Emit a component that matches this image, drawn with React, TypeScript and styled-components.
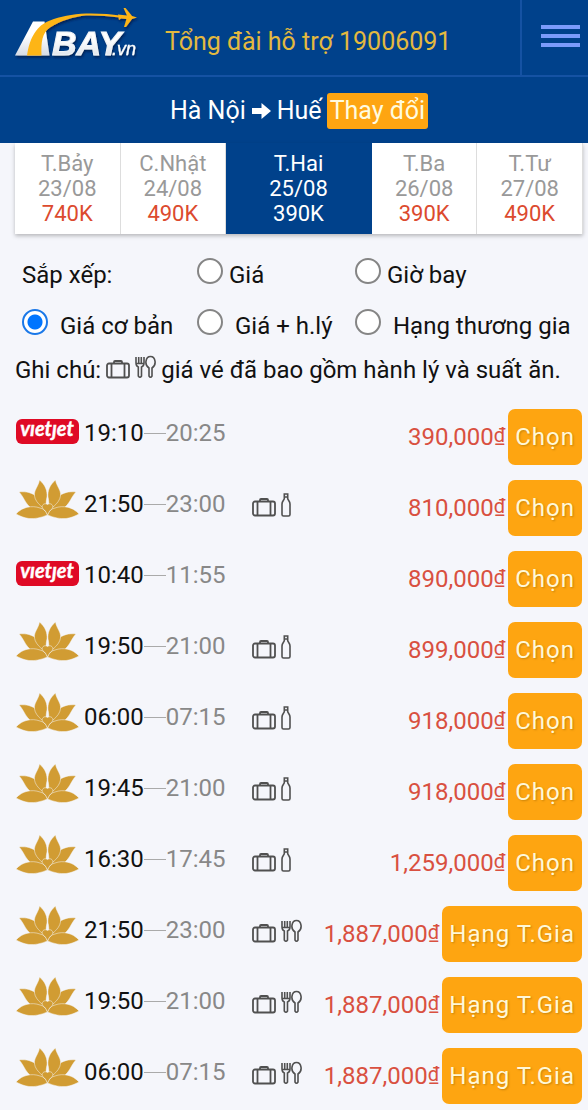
import React from 'react';
import styled, { createGlobalStyle } from 'styled-components';

const GlobalStyle = createGlobalStyle`
  * { box-sizing: border-box; }
  body { margin: 0; background: #f5f6fb; color: #111; font-family: Roboto, "Liberation Sans", sans-serif; font-size: 24px; line-height: 28px; }
  button { font: inherit; border: 0; cursor: pointer; }
  a { color: inherit; text-decoration: none; }
`;

const Header = styled.header`
  display: flex;
  align-items: stretch;
  height: 77px;
  background: #00418b;
  border-bottom: 2px solid #1552a3;
`;
const LogoLink = styled.a`
  flex: none;
  padding: 4px 0 0 12px;
`;
const Hotline = styled.a`
  flex: 1;
  padding: 28px 0 0 25px;
  font-size: 25px;
  color: #e3b93f;
  white-space: nowrap;
`;
const MenuButton = styled.button`
  display: flex;
  flex-direction: column;
  gap: 5px;
  width: 68px;
  padding: 25px 8px 0 19px;
  background: none;
  border-left: 2px solid #1552a3;
`;
const MenuLine = styled.span`
  height: 4px;
  width: 100%;
  background: #7c9bfb;
`;
const RouteBar = styled.section`
  display: flex;
  justify-content: center;
  align-items: center;
  gap: 5px;
  padding: 16px 0 14px 10px;
  min-height: 66px;
  font-size: 25px;
  background: #00418b;
  color: #fff;
`;
const ChangeButton = styled.button`
  padding: 4px 3px;
  border-radius: 3px;
  background: #fea511;
  color: #fffbe0;
`;
const Days = styled.nav`
  display: grid;
  grid-template-columns: 105fr 105fr 145fr 105fr 105fr;
  margin: 0 5px 0 15px;
  background: #fff;
  box-shadow: 0 2px 4px rgba(0, 0, 0, 0.25);
`;
const Day = styled.a<{ $active?: boolean }>`
  display: flex;
  flex-direction: column;
  align-items: center;
  padding: 8px 0;
  font-size: 22px;
  line-height: 25px;
  color: ${(p) => (p.$active ? '#fff' : '#999')};
  background: ${(p) => (p.$active ? '#00418b' : '#fff')};
  border-right: 1px solid ${(p) => (p.$active ? '#00418b' : '#ddd')};
`;
const DayPrice = styled.span<{ $active?: boolean }>`
  color: ${(p) => (p.$active ? '#fff' : '#dc4a2e')};
`;
const SortForm = styled.form`
  display: grid;
  grid-template-columns: 175fr 158fr 233fr;
  row-gap: 20px;
  margin: 0;
  padding: 24px 0 0 22px;
`;
const SortTitle = styled.span`
  padding-top: 3px;
`;
const Option = styled.label<{ $wide?: boolean }>`
  display: flex;
  align-items: flex-start;
  gap: ${(p) => (p.$wide ? '12px' : '6px')};
  white-space: nowrap;
`;
const OptionText = styled.span`
  padding-top: 3px;
`;
const Radio = styled.input`
  appearance: none;
  flex: none;
  width: 26px;
  height: 26px;
  margin: 0;
  border: 2px solid #858585;
  border-radius: 50%;
  background: #fff;
  &:checked {
    border-color: #1a78e8;
    background: radial-gradient(circle, #0075ff 7px, #fff 8px);
  }
`;
const Note = styled.p`
  display: flex;
  align-items: center;
  gap: 5px;
  margin: 0;
  padding: 16px 15px 0;
  white-space: nowrap;
`;
const Flights = styled.ul`
  display: flex;
  flex-direction: column;
  gap: 15px;
  margin: 0;
  padding: 25px 6px 6px 16px;
  list-style: none;
`;
const Flight = styled.li`
  display: flex;
  align-items: center;
  height: 56px;
`;
const Carrier = styled.span`
  display: flex;
  width: 63px;
  height: 56px;
  margin-right: 5px;
`;
const Times = styled.span`
  display: flex;
  align-items: center;
  width: 168px;
  padding-bottom: 8px;
  color: #111;
`;
const Dash = styled.span`
  width: 22px;
  height: 1px;
  background: #aaa;
`;
const Arrival = styled.span`
  color: #888;
`;
const Extras = styled.span`
  display: flex;
  align-items: center;
  gap: 5px;
  height: 28px;
  padding-bottom: 6px;
`;
const Price = styled.span`
  margin-left: auto;
  padding-right: 3px;
  color: #d95040;
`;
const Currency = styled.span`
  font-size: 20px;
  line-height: 20px;
  vertical-align: 3px;
`;
const SelectButton = styled.button`
  height: 56px;
  padding: 0 7px;
  border-radius: 7px;
  background: #fea511;
  color: #fff8d8;
  letter-spacing: 1px;
  text-shadow: 1px 1px 2px rgba(120, 80, 0, 0.4);
`;

const Logo = () => (
  <svg width="128" height="60" viewBox="12 4 128 60" role="img" aria-label="ABAY.vn">
    <defs>
      <linearGradient id="silver" x1="0" y1="0" x2="0" y2="1">
        <stop offset="0.4" stopColor="#fff" />
        <stop offset="1" stopColor="#d5dbe5" />
      </linearGradient>
      <filter id="shade" x="-10%" y="-10%" width="120%" height="130%">
        <feDropShadow dx="1" dy="2" stdDeviation="1" floodColor="#001b48" floodOpacity="0.8" />
      </filter>
    </defs>
    <g filter="url(#shade)">
      <path d="M33 21.500H44.500L49.500 55.500H15Z" fill="url(#silver)" />
      <path d="M27 55.500C29 42 33 34 38 28.500C42 24 46 22 50 20.500C60 16.500 72 14 86 13.500C100 13.300 111 14 120 15.500V17.500C108 16 98 15.300 86 15.500C74 16.500 60 21 50 27.500C42 33 41 42 41.500 55.500Z" fill="#fdb515" />
      <path d="M118 14.500L127 15.500L123.500 8H125.500L132 16L137 17.500L132 19L126 27H124L126.500 19L121 18.500L119 20Z" fill="#fdb515" />
      <text x="52" y="55" fontFamily="Liberation Sans, sans-serif" fontWeight="700" fontStyle="italic" fontSize="34" fill="url(#silver)" stroke="#f1f4f8">BAY</text>
      <text x="112" y="55" fontFamily="Liberation Sans, sans-serif" fontStyle="italic" fontSize="18" fill="#fff" stroke="#fff" strokeWidth="0.300">.vn</text>
    </g>
  </svg>
);

const Vietjet = () => (
  <svg width="63" height="56" viewBox="0 0 63 56" role="img" aria-label="vietjet">
    <rect x="0" y="10" width="63" height="25" rx="6" fill="#df0a25" />
    <text x="31" y="27" textAnchor="middle" fontFamily="Lato, sans-serif" fontWeight="700" fontStyle="italic" fontSize="20" fill="#fff" stroke="#fff" strokeWidth="0.400">vıetȷet</text>
  </svg>
);

const Lotus = () => (
  <svg width="63" height="56" viewBox="0 0 63 56" role="img" aria-label="Vietnam Airlines">
    <g fill="#d19c33" stroke="#f5f6fb" strokeWidth="0.500">
      <path d="M3 12C10 11 17 13 21 17C25 22 27 26 29 33L20 31C9 26 9 18 3 12Z" />
      <path d="M60 12C53 11 46 13 42 17C38 22 36 26 34 33L43 31C54 26 54 18 60 12Z" />
      <path d="M23.500 0C29.500 5 31.500 11 31 17C30 21 30 24 30.500 30C22 25 16.500 18 19 11C20.500 7 23 4 23.500 0Z" />
      <path d="M39.500 0C33.500 5 31.500 11 32 17C33 21 33 24 32.500 30C41 25 46.500 18 44 11C42.500 7 40 4 39.500 0Z" />
      <path d="M0 34C6 27 16 25 24 28C28 29 30 31 31.500 35C24 38 19 39 13 38.500C8 38 4 36 0 34Z" />
      <path d="M63 34C57 27 47 25 39 28C35 29 33 31 31.500 35C39 38 44 39 50 38.500C55 38 59 36 63 34Z" />
      <path d="M31.500 24.500C35 22 38.500 26 36 29C34 30 33 32 31.500 35C30 32 29 30 27 29C24.500 26 28 22 31.500 24.500Z" />
    </g>
  </svg>
);

const Suitcase = () => (
  <svg width="24" height="24" viewBox="0 0 24 24" fill="none" stroke="#505050" strokeWidth="1.800" role="img" aria-label="Hành lý">
    <rect x="1" y="8.500" width="22" height="14" rx="2" />
    <path d="M8 8.500V7Q8 6 9 6H15Q16 6 16 7V8.500M5.500 9V22M18.500 9V22" />
  </svg>
);
const Bottle = () => (
  <svg width="10" height="24" viewBox="0 0 10 24" fill="none" stroke="#505050" strokeWidth="1.600" role="img" aria-label="Nước uống">
    <path d="M3.300 1H6.700V5.500C6.700 7 9 8 9 11V21.500Q9 23 7.500 23H2.500Q1 23 1 21.500V11C1 8 3.300 7 3.300 5.500ZM3 4H7" />
  </svg>
);
const Cutlery = () => (
  <svg width="21" height="24" viewBox="0 0 21 24" fill="none" stroke="#505050" strokeWidth="1.600" role="img" aria-label="Suất ăn">
    <path d="M1 2V8Q1 11 3.300 12V21Q5 23.500 6.500 21V12Q9 11 9 8V2M3.700 2V8M6.300 2V8M1 8.500H9" />
    <path d="M14 13V21Q15.500 23.500 17 21V13C22 10 20.500 1.500 15.500 1.500S9 10 14 13Z" />
  </svg>
);
const Arrow = () => (
  <svg width="21" height="18" viewBox="0 0 21 18" fill="#fff" aria-hidden="true">
    <path d="M1 6H10.500V1L20 9L10.500 17V12H1Z" />
  </svg>
);

const days = [
  ['T.Bảy', '23/08', '740K'],
  ['C.Nhật', '24/08', '490K'],
  ['T.Hai', '25/08', '390K'],
  ['T.Ba', '26/08', '390K'],
  ['T.Tư', '27/08', '490K'],
];
const ACTIVE_DAY = '25/08';

type Extra = 'none' | 'drink' | 'meal';
type FlightInfo = { carrier: 'vj' | 'vn'; from: string; to: string; extra: Extra; price: string };
const flights: FlightInfo[] = [
  { carrier: 'vj', from: '19:10', to: '20:25', extra: 'none', price: '390,000' },
  { carrier: 'vn', from: '21:50', to: '23:00', extra: 'drink', price: '810,000' },
  { carrier: 'vj', from: '10:40', to: '11:55', extra: 'none', price: '890,000' },
  { carrier: 'vn', from: '19:50', to: '21:00', extra: 'drink', price: '899,000' },
  { carrier: 'vn', from: '06:00', to: '07:15', extra: 'drink', price: '918,000' },
  { carrier: 'vn', from: '19:45', to: '21:00', extra: 'drink', price: '918,000' },
  { carrier: 'vn', from: '16:30', to: '17:45', extra: 'drink', price: '1,259,000' },
  { carrier: 'vn', from: '21:50', to: '23:00', extra: 'meal', price: '1,887,000' },
  { carrier: 'vn', from: '19:50', to: '21:00', extra: 'meal', price: '1,887,000' },
  { carrier: 'vn', from: '06:00', to: '07:15', extra: 'meal', price: '1,887,000' },
];

export default function App() {
  return (
    <>
      <GlobalStyle />
      <Header>
        <LogoLink href="#"><Logo /></LogoLink>
        <Hotline href="tel:19006091">Tổng đài hỗ trợ 19006091</Hotline>
        <MenuButton type="button" aria-label="Menu"><MenuLine /><MenuLine /><MenuLine /></MenuButton>
      </Header>
      <RouteBar>
        <span>Hà Nội</span><Arrow /><span>Huế</span>
        <ChangeButton type="button">Thay đổi</ChangeButton>
      </RouteBar>
      <Days>
        {days.map(([name, date, price]) => (
          <Day key={date} href="#" $active={date === ACTIVE_DAY}>
            <span>{name}</span>
            <span>{date}</span>
            <DayPrice $active={date === ACTIVE_DAY}>{price}</DayPrice>
          </Day>
        ))}
      </Days>
      <SortForm>
        <SortTitle>Sắp xếp:</SortTitle>
        <Option><Radio type="radio" name="order" /><OptionText>Giá</OptionText></Option>
        <Option><Radio type="radio" name="order" /><OptionText>Giờ bay</OptionText></Option>
        <Option $wide><Radio type="radio" name="fare" defaultChecked /><OptionText>Giá cơ bản</OptionText></Option>
        <Option $wide><Radio type="radio" name="fare" /><OptionText>Giá + h.lý</OptionText></Option>
        <Option $wide><Radio type="radio" name="fare" /><OptionText>Hạng thương gia</OptionText></Option>
      </SortForm>
      <Note>
        <span>Ghi chú:</span>
        <Extras><Suitcase /><Cutlery /></Extras>
        <span>giá vé đã bao gồm hành lý và suất ăn.</span>
      </Note>
      <Flights>
        {flights.map((f, i) => (
          <Flight key={i}>
            <Carrier>{f.carrier === 'vj' ? <Vietjet /> : <Lotus />}</Carrier>
            <Times><span>{f.from}</span><Dash /><Arrival>{f.to}</Arrival></Times>
            {f.extra !== 'none' && (
              <Extras><Suitcase />{f.extra === 'drink' ? <Bottle /> : <Cutlery />}</Extras>
            )}
            <Price>{f.price}<Currency>₫</Currency></Price>
            <SelectButton type="button">{f.extra === 'meal' ? 'Hạng T.Gia' : 'Chọn'}</SelectButton>
          </Flight>
        ))}
      </Flights>
    </>
  );
}
